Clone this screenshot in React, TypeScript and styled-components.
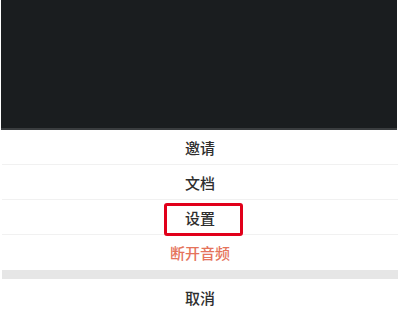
import * as React from "react";
import styled, { createGlobalStyle } from "styled-components";

const Global = createGlobalStyle`
  html, body {
    margin: 0;
    padding: 0;
    background: #ffffff;
  }
  body {
    font-family: "Noto Sans CJK SC", "Noto Sans", sans-serif;
  }
`;

const Screen = styled.div`
  width: 400px;
  height: 316px;
  display: flex;
  flex-direction: column;
  background: #ffffff;
  overflow: hidden;
`;

const Video = styled.div`
  height: 128px;
  margin: 0 3px 0 1px;
  background: #1a1d1f;
  border-bottom: 2px solid #3a3d3f;
`;

const Sheet = styled.div`
  display: flex;
  flex-direction: column;
  padding: 0 2px;
`;

const Item = styled.div<{ $danger?: boolean; $last?: boolean }>`
  position: relative;
  height: 35px;
  display: flex;
  align-items: center;
  justify-content: center;
  font-size: 15px;
  font-weight: 500;
  color: ${(p) => (p.$danger ? "#e5735b" : "#2e2e2e")};
  border-bottom: ${(p) => (p.$last ? "none" : "1px solid #f1f1f1")};
  box-sizing: border-box;
`;

const Gap = styled.div`
  height: 9px;
  background: #e6e6e6;
`;

const Cancel = styled(Item)`
  height: 37px;
`;

const Highlight = styled.div`
  position: absolute;
  left: 162px;
  top: 3px;
  width: 73px;
  height: 27px;
  border: 3px solid #e1001a;
  border-radius: 3px;
`;

export default function App() {
  return (
    <>
      <Global />
      <Screen>
        <Video />
        <Sheet>
          <Item>邀请</Item>
          <Item>文档</Item>
          <Item>
            设置
            <Highlight />
          </Item>
          <Item $danger $last>
            断开音频
          </Item>
          <Gap />
          <Cancel $last>取消</Cancel>
        </Sheet>
      </Screen>
    </>
  );
}
